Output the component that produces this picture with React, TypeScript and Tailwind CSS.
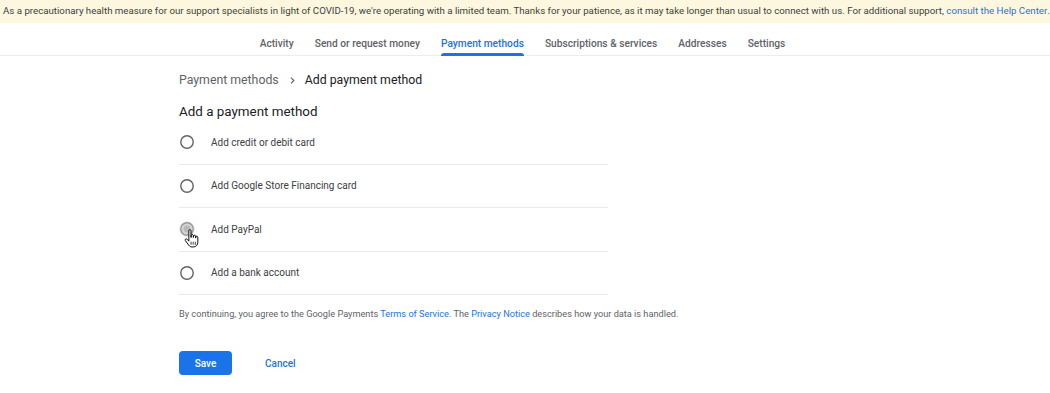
import React, { useState } from 'react';

const tabs = [
  'Activity',
  'Send or request money',
  'Payment methods',
  'Subscriptions & services',
  'Addresses',
  'Settings',
];

const options = [
  { id: 'card', label: 'Add credit or debit card' },
  { id: 'gsf', label: 'Add Google Store Financing card' },
  { id: 'paypal', label: 'Add PayPal' },
  { id: 'bank', label: 'Add a bank account' },
];

function Radio({ pressed }: { pressed?: boolean }) {
  return (
    <svg width="16" height="16" viewBox="0 0 16 16" className="shrink-0">
      {pressed && <circle cx="8" cy="8" r="7.8" fill="#e8e8e8" />}
      <circle
        cx="8"
        cy="8"
        r="6.2"
        fill={pressed ? '#d4d4d4' : 'none'}
        stroke={pressed ? '#9a9a9a' : '#5f6368'}
        strokeWidth="1.4"
      />
      {pressed && <circle cx="8" cy="8" r="3.4" fill="#b8b8b8" />}
    </svg>
  );
}

function HandCursor() {
  return (
    <svg width="15" height="19" viewBox="0 0 14 18" className="absolute left-[5px] top-[8px]">
      <path
        d="M4.5 1.6c0-.6.4-1 1-1s1 .4 1 1V8h.2V6.2c0-.6.4-1 1-1s1 .4 1 1V8h.2V6.9c0-.6.4-1 1-1s1 .4 1 1V8.6h.1v-.8c0-.6.4-1 1-1s1 .4 1 1v4.6c0 2.5-1.6 4.6-4.3 4.6H7.4c-1.3 0-2.2-.6-3-1.6L1.2 11c-.4-.5-.3-1.1.2-1.4.5-.4 1.1-.3 1.5.1L4.5 11.5V1.6z"
        fill="#fff"
        stroke="#000"
        strokeWidth="0.9"
        strokeLinejoin="round"
      />
      <path d="M6.6 12v3M8.6 12v3M10.6 12v3" stroke="#000" strokeWidth="0.7" />
    </svg>
  );
}

export default function App() {
  const [selected, setSelected] = useState<string | null>(null);

  return (
    <div className="min-h-screen bg-white font-['Roboto',_'Liberation_Sans',_sans-serif] text-[#3c4043]">
      {/* covid notice */}
      <div className="h-[23px] bg-[#fef7e0] flex items-center px-[3px] text-[9.7px] text-[#3c4043] whitespace-nowrap overflow-hidden">
        As a precautionary health measure for our support specialists in light of COVID-19, we're operating with a limited team. Thanks for your patience, as it may take longer than usual to connect with us. For additional support,&nbsp;
        <a className="text-[#1a73e8]">consult the Help Center</a>.
      </div>

      {/* tabs */}
      <nav className="h-[33px] border-b border-[#ececec] flex justify-center gap-[21px] pr-[5px]">
        {tabs.map(t => {
          const active = t === 'Payment methods';
          return (
            <div
              key={t}
              className={`relative flex items-center pt-[9px] text-[10.2px] font-medium ${
                active ? 'text-[#1a73e8]' : 'text-[#5f6368]'
              }`}
            >
              {t}
              {active && (
                <span className="absolute left-0 right-0 bottom-[-1px] h-[3px] rounded-t-[3px] bg-[#1a73e8]" />
              )}
            </div>
          );
        })}
      </nav>

      <main className="mx-auto w-[692px]">
        <div className="mt-[12px] h-[24px] flex items-center text-[12.3px]">
          <span className="text-[#5f6368]">Payment methods</span>
          <span className="ml-[9px] mr-[8px] text-[#5f6368]">
            <svg width="9" height="9" viewBox="0 0 10 10">
              <path d="M3.3 1.8 6.5 5 3.3 8.2" fill="none" stroke="#5f6368" strokeWidth="1.3" />
            </svg>
          </span>
          <span className="text-[#202124]">Add payment method</span>
        </div>

        <h1 className="mt-[11px] text-[13.4px] leading-[18px] text-[#202124]">Add a payment method</h1>

        <div className="w-[429px]">
          {options.map(o => (
            <label
              key={o.id}
              onClick={() => setSelected(o.id)}
              className="h-[43.5px] border-b border-[#e8eaed] flex items-center cursor-pointer"
            >
              <span className="relative flex items-center">
                <Radio pressed={o.id === 'paypal' || selected === o.id} />
                {o.id === 'paypal' && <HandCursor />}
              </span>
              <span className="ml-[16px] text-[10px] text-[#3c4043]">{o.label}</span>
            </label>
          ))}
        </div>

        <p className="mt-[11px] text-[9.2px] leading-[16px] text-[#5f6368]">
          By continuing, you agree to the Google Payments <a className="text-[#1a73e8]">Terms of Service</a>. The{' '}
          <a className="text-[#1a73e8]">Privacy Notice</a> describes how your data is handled.
        </p>

        <div className="mt-[29px] flex items-center">
          <button className="w-[53px] h-[24px] rounded-[4px] bg-[#1a73e8] text-white text-[10px] font-medium">
            Save
          </button>
          <button className="ml-[33px] text-[10px] font-medium text-[#1a73e8]">Cancel</button>
        </div>
      </main>
    </div>
  );
}
